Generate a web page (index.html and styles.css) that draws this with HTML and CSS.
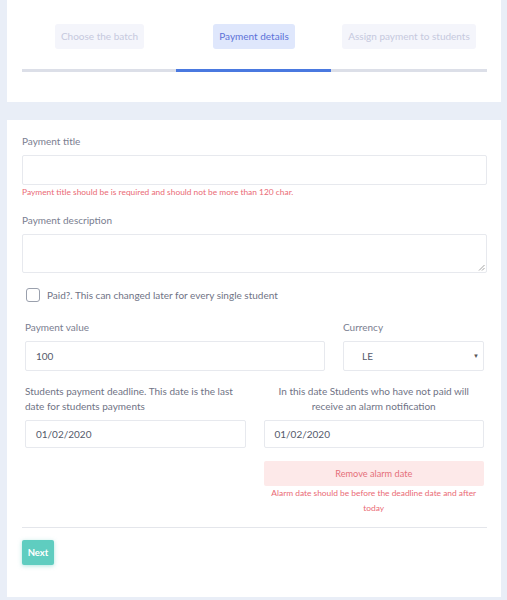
FILE: index.html
```html
<!DOCTYPE html>
<html>
<head>
<meta charset="utf-8">
<link rel="stylesheet" href="styles.css">
</head>
<body>
<div class="card top">
  <div class="steps">
    <div class="step"><span class="step-btn">Choose the batch</span></div>
    <div class="step"><span class="step-btn active">Payment details</span></div>
    <div class="step"><span class="step-btn">Assign payment to students</span></div>
  </div>
  <div class="progress">
    <div class="seg"></div>
    <div class="seg on"></div>
    <div class="seg"></div>
  </div>
</div>

<div class="card form">
  <label class="lbl">Payment title</label>
  <div class="input title-input"></div>
  <div class="err">Payment title should be is required and should not be more than 120 char.</div>

  <label class="lbl desc-lbl">Payment description</label>
  <div class="input textarea">
    <svg class="grip" width="7" height="7" viewBox="0 0 7 7"><path d="M6.5 1 L1 6.5 M6.5 4 L4 6.5" stroke="#8a8a8a" stroke-width="0.8"/></svg>
  </div>

  <div class="check-row">
    <span class="checkbox"></span>
    <span class="check-txt">Paid?. This can changed later for every single student</span>
  </div>

  <div class="row row1">
    <div class="col value-col">
      <label class="lbl2">Payment value</label>
      <div class="input field">100</div>
    </div>
    <div class="col cur-col">
      <label class="lbl2">Currency</label>
      <div class="input field select">LE<span class="caret">▼</span></div>
    </div>
  </div>

  <div class="row row2">
    <div class="col half">
      <label class="lbl3">Students payment deadline. This date is the last date for students payments</label>
      <div class="input date">01/02/2020</div>
    </div>
    <div class="col half">
      <label class="lbl3 center">In this date Students who have not paid will receive an alarm notification</label>
      <div class="input date">01/02/2020</div>
      <div class="remove">Remove alarm date</div>
      <div class="err2">Alarm date should be before the deadline date and after today</div>
    </div>
  </div>

  <hr class="sep">
  <div class="actions"><button class="next">Next</button></div>
</div>
</body>
</html>
```

FILE: styles.css
```css
* { box-sizing: border-box; }
body {
  margin: 0;
  background: #e9eef7;
  font-family: "Lato", "Noto Sans", sans-serif;
  color: #6b6f80;
  width: 507px;
}
.card {
  background: #fff;
  margin: 0 6px 0 7px;
}
.top {
  height: 102px;
  padding: 24px 14px 0 15px;
}
.steps {
  display: grid;
  grid-template-columns: 155px 154px 156px;
}
.step { display: flex; justify-content: center; }
.step-btn {
  height: 25px;
  line-height: 25px;
  padding: 0 6px;
  font-size: 10px;
  border-radius: 3px;
  background: #f4f5fb;
  color: #c6c9de;
}
.step-btn.active {
  background: #dfe7fc;
  color: #5d72d8;
}
.progress {
  display: grid;
  grid-template-columns: 154px 155px 156px;
  margin-top: 20px;
  align-items: center;
}
.seg { height: 3px; background: #dcdfe8; }
.seg.on { background: #4a79e0; }

.form {
  margin-top: 18px;
  height: 477px;
  padding: 14px 14px 0 15px;
  display: flex;
  flex-direction: column;
}
.lbl {
  font-size: 10px;
  line-height: 14px;
  color: #7a7e90;
}
.input {
  border: 1px solid #e7e9ee;
  border-radius: 2px;
  background: #fff;
}
.title-input { height: 30px; margin-top: 7px; }
.err {
  font-size: 8.4px;
  line-height: 12px;
  color: #ea6a75;
  margin-top: 1px;
}
.desc-lbl { margin-top: 15px; }
.textarea {
  height: 39px;
  margin-top: 7px;
  position: relative;
}
.grip { position: absolute; right: 1px; bottom: 1px; }
.check-row {
  display: flex;
  align-items: center;
  margin-top: 14px;
  padding-left: 4px;
  height: 16px;
}
.checkbox {
  width: 14px;
  height: 14px;
  border: 1.5px solid #9aa0ad;
  border-radius: 3px;
}
.check-txt {
  font-size: 10px;
  margin-left: 7px;
  color: #6f7385;
}
.row {
  display: flex;
  padding: 0 3px;
}
.row1 { margin-top: 17px; gap: 18px; }
.value-col { width: 300px; }
.cur-col { width: 141px; }
.col { display: flex; flex-direction: column; }
.lbl2 {
  font-size: 10px;
  line-height: 14px;
  color: #7a7e90;
}
.field {
  height: 30px;
  margin-top: 7px;
  font-size: 10px;
  line-height: 28px;
  padding-left: 10px;
  color: #555a6b;
}
.select { position: relative; padding-left: 18px; }
.caret {
  position: absolute;
  right: 4px;
  top: 0;
  font-size: 6px;
  color: #555;
}
.row2 { margin-top: 13px; gap: 18px; }
.half { width: 221px; }
.lbl3 {
  font-size: 10px;
  line-height: 15px;
  color: #6f7385;
  height: 30px;
}
.lbl3.center { text-align: center; }
.date {
  height: 28px;
  margin-top: 6px;
  font-size: 10px;
  line-height: 26px;
  padding-left: 10px;
  color: #555a6b;
}
.remove {
  margin-top: 13px;
  height: 25px;
  line-height: 25px;
  text-align: center;
  background: #fde9e9;
  color: #e5707a;
  font-size: 9.2px;
  border-radius: 2px;
}
.err2 {
  font-size: 8.4px;
  line-height: 15px;
  text-align: center;
  color: #ea6a75;
  padding: 0 2px;
}
.sep {
  border: 0;
  border-top: 1px solid #e4e6eb;
  margin: 11px 0 0 0;
}
.actions { margin-top: 12px; }
.next {
  width: 32px;
  height: 25px;
  padding: 0;
  border: 0;
  border-radius: 2px;
  background: #5fcdc0;
  color: #fff;
  font-family: inherit;
  font-weight: 700;
  font-size: 9.5px;
  box-shadow: 0 1px 4px rgba(95, 205, 192, 0.5);
}
```
